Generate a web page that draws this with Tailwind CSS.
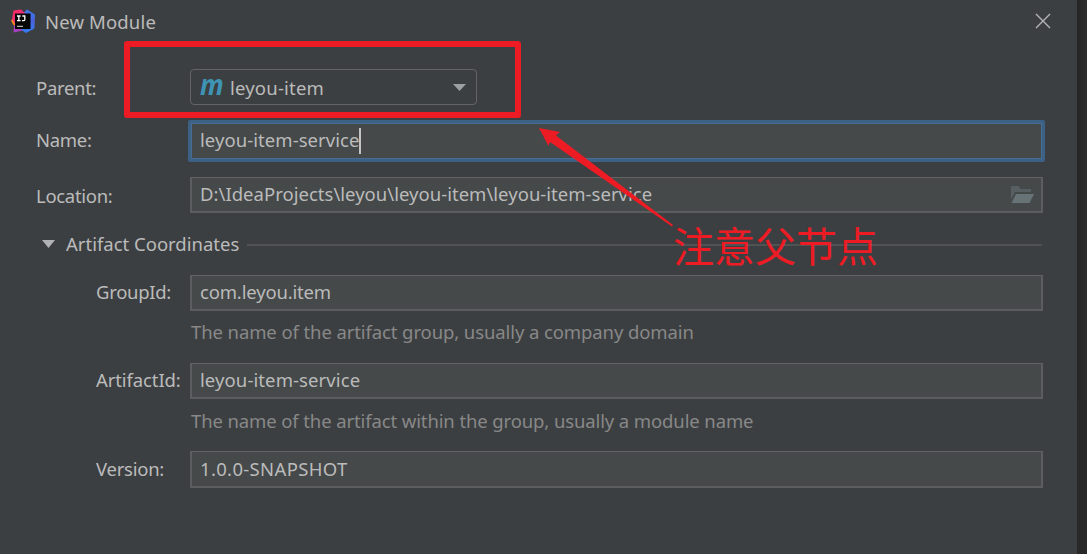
<!DOCTYPE html>
<html lang="en">
<head>
<meta charset="utf-8">
<title>New Module</title>
<script src="https://cdn.jsdelivr.net/npm/@tailwindcss/browser@4"></script>
</head>
<body class="relative flex h-[554px] w-[1087px] overflow-hidden bg-[#282828] font-['Noto_Sans','Noto_Sans_CJK_SC',sans-serif] text-[18.5px] leading-6 whitespace-nowrap text-[#bbbbbb]">
  <main class="flex h-full w-[1077px] flex-col bg-[#3c3f41]">
    <header class="flex h-11 shrink-0 items-center pl-[11px] pr-[26px]">
      <svg class="mb-[2px] size-6" viewBox="0 0 24 24">
        <defs>
          <linearGradient id="b" x1="0" y1="0" x2="0" y2="1"><stop offset="0" stop-color="#3b78e8"/><stop offset=".5" stop-color="#4a62dc"/><stop offset="1" stop-color="#3180f2"/></linearGradient>
          <linearGradient id="p" x1="0" y1="0" x2="1" y2="1"><stop offset="0" stop-color="#ff2d5e"/><stop offset="1" stop-color="#d62b8e"/></linearGradient>
        </defs>
        <path d="M13 3.500 16 .5 24 5.500 23.500 19.500 15 24 9 20Z" fill="url(#b)"/>
        <path d="M3 10 9 20 12 21.500 2.500 23.500 3 16Z" fill="#a83fc0"/>
        <path d="M0 11.500 4 8 5 17 2.500 16Z" fill="#fb8b19"/>
        <path d="M2.500 1.500 10 .5 15 5 8 14 4 15 1 10Z" fill="url(#p)"/>
        <rect x="4" y="4.500" width="15.500" height="15.500" fill="#070707"/>
        <path d="M6 7h3.600M7.800 7v4.500M6 11.700h3.600M11.300 7h2.500v3.500q0 1.200-1.200 1.200H11" fill="none" stroke="#fff" stroke-width="1.300"/>
        <path d="M6 17.300h6" stroke="#ddd" stroke-width="1"/>
      </svg>
      <h1 class="ml-[10px] tracking-[0.15px]">New Module</h1>
      <svg class="mb-[2px] ml-auto size-4" viewBox="0 0 16 16" fill="none" stroke="#b5b5b5" stroke-width="1.400"><path d="M1 1 15 15M15 1 1 15"/></svg>
    </header>

    <section class="flex flex-col">
      <div class="mt-[25px] flex h-9 items-center pl-9">
        <label class="w-[154px] pt-[2px] tracking-[-0.3px]">Parent:</label>
        <div class="flex h-9 w-[287px] items-center rounded-[4px] border border-[#646464] pl-[9px] pr-[10px]">
          <span class="mb-[5px] w-[30px]"><span class="inline-block origin-left scale-x-90 font-['Open_Sans'] text-[29px] leading-7 font-bold text-[#3e94b5] italic">m</span></span>
          <span class="pt-[2px] tracking-[0.2px]">leyou-item</span>
          <svg class="ml-auto h-[7px] w-[13px]" viewBox="0 0 13 7" fill="#9da0a3"><path d="M0 0h13L6.500 7Z"/></svg>
        </div>
      </div>

      <div class="mt-[15px] flex h-[42px] items-center pl-9">
        <label class="w-[152px] pb-[2px] tracking-[-0.3px]">Name:</label>
        <div class="flex h-[42px] w-[857px] items-center rounded-[2px] border-[3px] border-[#3d6185] bg-[#45494a] pl-[9px] ring-1 ring-[#466d94] ring-inset">
          <span class="pb-[2px] tracking-[0.06px]">leyou-item-service</span><i class="-ml-px h-[26px] w-[2px] bg-[#c4c4c4]"></i>
        </div>
      </div>

      <div class="mt-[15px] flex h-9 items-center pl-9">
        <label class="w-[154px] pt-[2px] tracking-[-0.3px]">Location:</label>
        <div class="flex h-9 w-[853px] items-center border-x-2 border-t border-b-2 border-[#5b5d5e] border-t-[#646464] bg-[#45494a] pr-[7px] pl-[8px]">
          <span class="pb-px tracking-[0.02px]">D:\IdeaProjects\leyou\leyou-item\leyou-item-service</span>
          <svg class="ml-auto h-[18px] w-[23px]" viewBox="0 0 23 18"><path d="M0 0H7.500L9.500 3H20V6H4L0 13.500Z" fill="#585f62"/><path d="M5 8H23L18.500 17H.5Z" fill="#687377"/></svg>
        </div>
      </div>

      <div class="mt-[18px] flex h-[27px] items-center pr-[35px] pl-[42px]">
        <svg class="mb-[2px] h-[8px] w-[13px]" viewBox="0 0 13 8" fill="#b0b2b3"><path d="M0 0h13L6.500 8Z"/></svg>
        <h2 class="ml-[11px] w-[181px] pb-[2px]">Artifact Coordinates</h2>
        <div class="h-[2px] grow bg-[#515254]"></div>
      </div>

      <div class="mt-[17px] flex h-9 items-center pl-24">
        <label class="w-[94px] pb-[2px] tracking-[-0.3px]">GroupId:</label>
        <div class="flex h-9 w-[853px] items-center border-x-2 border-t border-b-2 border-[#5b5d5e] border-t-[#646464] bg-[#45494a] pb-px pl-[8px] tracking-[-0.17px]">com.leyou.item</div>
      </div>
      <p class="mt-[9px] h-6 pl-[191px] tracking-[-0.1px] text-[#888888]">The name of the artifact group, usually a company domain</p>

      <div class="mt-[19px] flex h-9 items-center pl-24">
        <label class="w-[94px] pb-[2px] tracking-[-0.1px]">ArtifactId:</label>
        <div class="flex h-9 w-[853px] items-center border-x-2 border-t border-b-2 border-[#5b5d5e] border-t-[#646464] bg-[#45494a] pb-px pl-[8px] tracking-[0.1px]">leyou-item-service</div>
      </div>
      <p class="mt-[10px] h-6 pl-[191px] tracking-[-0.115px] text-[#888888]">The name of the artifact within the group, usually a module name</p>

      <div class="mt-[18px] flex h-[37px] items-center pl-24">
        <label class="w-[94px] pb-[2px] tracking-[-0.25px]">Version:</label>
        <div class="flex h-[37px] w-[853px] items-center border-x-2 border-t border-b-2 border-[#5b5d5e] border-t-[#646464] bg-[#45494a] pb-px pl-[8px] tracking-[0.33px]">1.0.0-SNAPSHOT</div>
      </div>
    </section>
  </main>
  <aside class="h-[400px] w-[10px] bg-linear-to-r from-[#252525] to-[#2d2d2d]"></aside>

  <!-- annotation overlay -->
  <div class="absolute top-[41px] left-[124px] h-[77px] w-[397px] rounded-[3px] border-[6px] border-[#ed1c24]"></div>
  <svg class="absolute top-[125px] left-[536px] h-[104px] w-[140px]" viewBox="536 125 140 104" fill="#ed1c24"><path d="M539 128 560 132 556 135.500 673 225 672 226.500 550 142 548.500 146Z"/></svg>
  <p class="absolute top-[220px] left-[673px] font-['Noto_Sans_CJK_SC'] text-[41px] leading-[48px] text-[#ed1c24]">注意父节点</p>
</body>
</html>
